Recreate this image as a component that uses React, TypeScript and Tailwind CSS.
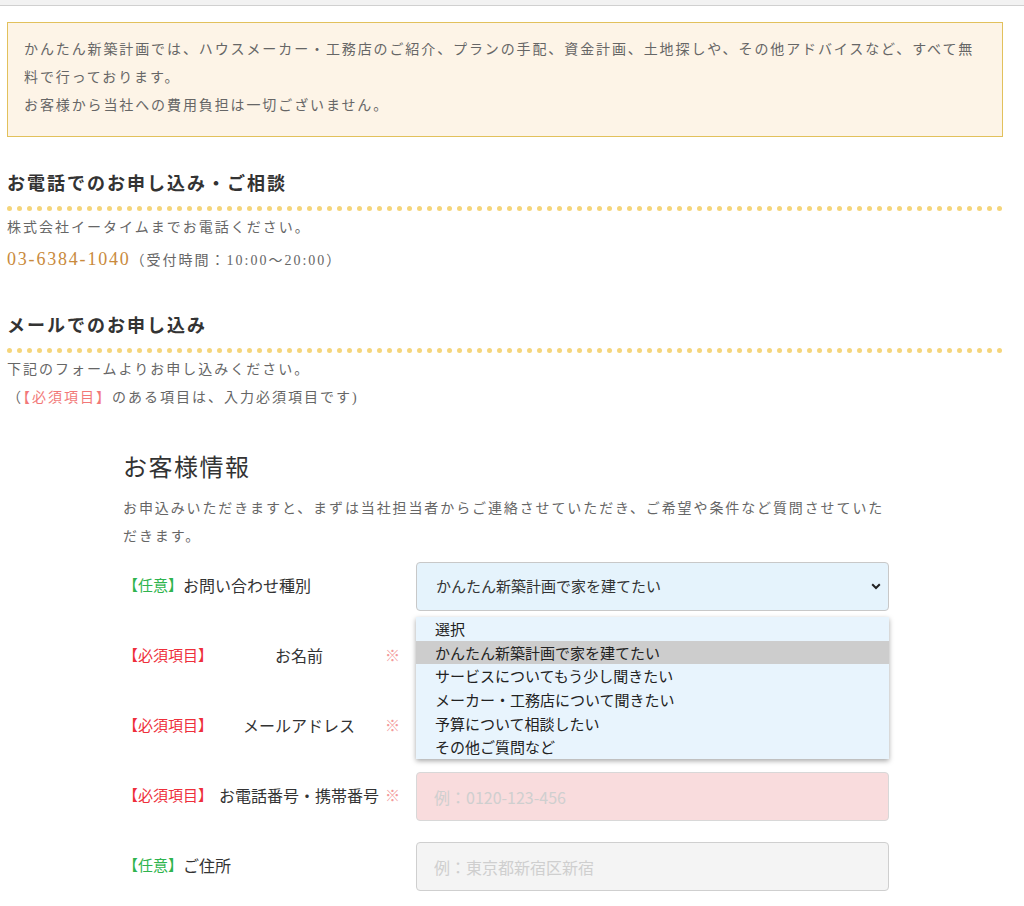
import React from "react";

const serif = { fontFamily: '"Liberation Serif", "Noto Sans CJK JP", serif' };
const sans = { fontFamily: '"Noto Sans CJK JP", "Noto Sans", sans-serif' };

const options = [
  "選択",
  "かんたん新築計画で家を建てたい",
  "サービスについてもう少し聞きたい",
  "メーカー・工務店について聞きたい",
  "予算について相談したい",
  "その他ご質問など",
];

function Optional() {
  return <span className="text-[15px] text-[#2fb44e]">【任意】</span>;
}
function Required() {
  return <span className="text-[15px] text-[#ee2f3b]">【必須項目】</span>;
}
function Mark() {
  return <span className="text-[15px] text-[#f39a9a]">※</span>;
}

const inputBase =
  "w-full h-[49px] rounded-[4px] border pl-[17px] text-[16px] placeholder:text-[#cfcfcf] outline-none";

export default function App() {
  return (
    <div className="w-[1024px] min-h-[906px] bg-white overflow-hidden" style={serif}>
      <div className="h-[6px] bg-[#f2f2f2] border-b border-[#d0d0d0]" />
      <div className="pl-[7px] pr-[21px]">
        <div className="mt-[16px] border border-[#e2c15c] bg-[#fdf4e7] px-[16px] pt-[13px] pb-[16px] text-[14px] leading-[28px] tracking-[0.135em] text-[#666]">
          <p>
            かんたん新築計画では、ハウスメーカー・工務店のご紹介、プランの手配、資金計画、土地探しや、その他アドバイスなど、すべて無料で行っております。
          </p>
          <p>お客様から当社への費用負担は一切ございません。</p>
        </div>

        <section className="mt-[33px]">
          <h2 className="text-[18px] leading-[28px] font-bold tracking-[2px] text-[#333] pb-[8px] border-b-[5px] border-dotted border-[#f5d57a]">
            お電話でのお申し込み・ご相談
          </h2>
          <p className="mt-[3px] text-[14px] leading-[28px] tracking-[2px] text-[#666]">
            株式会社イータイムまでお電話ください。
          </p>
          <p className="text-[14px] leading-[34px] tracking-[2px] text-[#666]">
            <span className="text-[18px] text-[#c98a3c] tracking-[1.8px]">03-6384-1040</span>
            <span className="tracking-[2px]">（受付時間：10:00〜20:00）</span>
          </p>
        </section>

        <section className="mt-[34px]">
          <h2 className="text-[18px] leading-[28px] font-bold tracking-[2px] text-[#333] pb-[8px] border-b-[5px] border-dotted border-[#f5d57a]">
            メールでのお申し込み
          </h2>
          <p className="mt-[3px] text-[14px] leading-[28px] tracking-[2px] text-[#666]">
            下記のフォームよりお申し込みください。
          </p>
          <p className="text-[14px] leading-[28px] tracking-[2px] text-[#666]">
            （<span className="text-[#f27878]">【必須項目】</span>のある項目は、入力必須項目です)
          </p>
        </section>

        <div className="mt-[38px] ml-[116px] w-[768px]">
          <h3 className="text-[24px] leading-[36px] tracking-[1.5px] text-[#333]">お客様情報</h3>
          <p className="mt-[9px] text-[14px] leading-[28px] tracking-[0.135em] text-[#666]">
            お申込みいただきますと、まずは当社担当者からご連絡させていただき、ご希望や条件など質問させていただきます。
          </p>

          <div
            className="mt-[11px] grid grid-cols-[277px_473px] gap-x-[16px] gap-y-[21px] auto-rows-[49px] text-[#333]"
            style={sans}
          >
            {/* Row 1 */}
            <div className="flex items-center pb-[3px]">
              <Optional />
              <span className="text-[16px]">お問い合わせ種別</span>
            </div>
            <div className="relative">
              <select
                className="appearance-none w-full h-[49px] rounded-[4px] border border-[#c8c8c8] bg-[#e5f3fc] pl-[19px] text-[15px] text-[#333] outline-none"
                defaultValue="かんたん新築計画で家を建てたい"
                style={sans}
              >
                {options.map((o) => (
                  <option key={o} value={o}>
                    {o}
                  </option>
                ))}
              </select>
              <svg
                className="absolute right-[8px] top-[21px] pointer-events-none"
                width="10"
                height="7"
                viewBox="0 0 10 7"
              >
                <path d="M1.2 1.3 L5 5 L8.8 1.3" fill="none" stroke="#222" strokeWidth="2" />
              </svg>
              <ul className="absolute left-0 top-[55px] z-10 w-[473px] bg-[#e8f4fd] shadow-[0_2px_5px_rgba(0,0,0,0.35)] text-[15px] text-[#222]">
                {options.map((o, i) => (
                  <li
                    key={o}
                    className={
                      "pl-[19px] h-[23.7px] leading-[23.7px] " + (i === 1 ? "bg-[#cdcdcd]" : "")
                    }
                  >
                    {o}
                  </li>
                ))}
              </ul>
            </div>

            {/* Row 2 */}
            <div className="flex items-center justify-between pb-[3px]">
              <Required />
              <span className="text-[16px]">お名前</span>
              <Mark />
            </div>
            <div>
              <input
                className={inputBase + " border-[#d8d8d8] bg-[#f9dcdd]"}
                placeholder="例：山田太郎"
                style={sans}
              />
            </div>

            {/* Row 3 */}
            <div className="flex items-center justify-between pb-[3px]">
              <Required />
              <span className="text-[16px]">メールアドレス</span>
              <Mark />
            </div>
            <div>
              <input
                className={inputBase + " border-[#d8d8d8] bg-[#f9dcdd]"}
                placeholder="例：info@example.com"
                style={sans}
              />
            </div>

            {/* Row 4 */}
            <div className="flex items-center justify-between pb-[3px]">
              <Required />
              <span className="text-[16px]">お電話番号・携帯番号</span>
              <Mark />
            </div>
            <div>
              <input
                className={inputBase + " border-[#d8d8d8] bg-[#f9dcdd]"}
                placeholder="例：0120-123-456"
                style={sans}
              />
            </div>

            {/* Row 5 */}
            <div className="flex items-center pb-[3px]">
              <Optional />
              <span className="text-[16px]">ご住所</span>
            </div>
            <div>
              <input
                className={inputBase + " border-[#cfcfcf] bg-[#f4f4f4]"}
                placeholder="例：東京都新宿区新宿"
                style={sans}
              />
            </div>
          </div>
        </div>
      </div>
    </div>
  );
}
